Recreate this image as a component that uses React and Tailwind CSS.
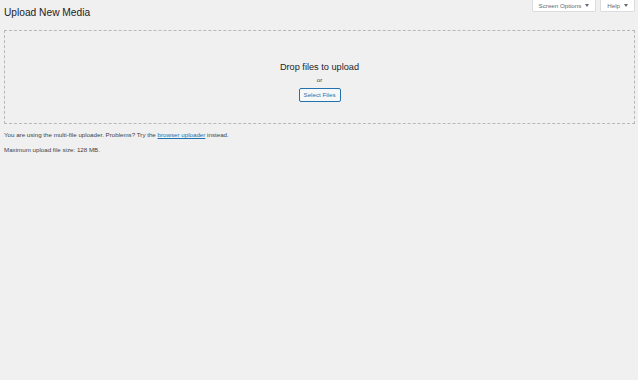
import React from "react";

function Caret() {
  return <span className="inline-block h-0 w-0 border-x-[2.5px] border-t-[3px] border-x-transparent border-t-[#646970]" />;
}

export default function App() {
  return (
    <div className="min-h-[380px] w-[638px] bg-[#f0f0f1] text-[#3c434a] font-['Liberation_Sans',Arial,sans-serif]">
      {/* top tabs */}
      <div className="flex justify-end gap-[4px] pr-[3px]">
        <button className="flex h-[12px] items-center gap-[4px] rounded-b-[2px] border border-t-0 border-[#dcdcde] bg-white px-[6px] text-[6.2px] text-[#646970]">
          Screen Options <Caret />
        </button>
        <button className="flex h-[12px] items-center gap-[4px] rounded-b-[2px] border border-t-0 border-[#dcdcde] bg-white px-[6px] text-[6.2px] text-[#646970]">
          Help <Caret />
        </button>
      </div>

      <div className="px-[4px]">
        <h1 className="-mt-[6px] text-[10.2px] leading-[14px] text-[#1d2327]">Upload New Media</h1>

        <div className="mt-[10px] flex h-[94px] w-[631px] flex-col items-center justify-center border border-dashed border-[#b4b9be]">
          <p className="mt-[8px] text-[9.2px] leading-[12px] text-[#1d2327]">Drop files to upload</p>
          <p className="mt-[2px] text-[6.2px] leading-[10px]">or</p>
          <button className="mt-[3px] h-[14px] w-[42px] rounded-[2px] border border-[#2271b1] bg-[#f6f7f7] text-[6.2px] text-[#2271b1]">
            Select Files
          </button>
        </div>

        <p className="mt-[6px] text-[6.2px] leading-[9px]">
          You are using the multi-file uploader. Problems? Try the{" "}
          <a href="#" className="text-[#2271b1] underline">browser uploader</a> instead.
        </p>
        <p className="mt-[6px] text-[6.2px] leading-[9px]">Maximum upload file size: 128 MB.</p>
      </div>
    </div>
  );
}
